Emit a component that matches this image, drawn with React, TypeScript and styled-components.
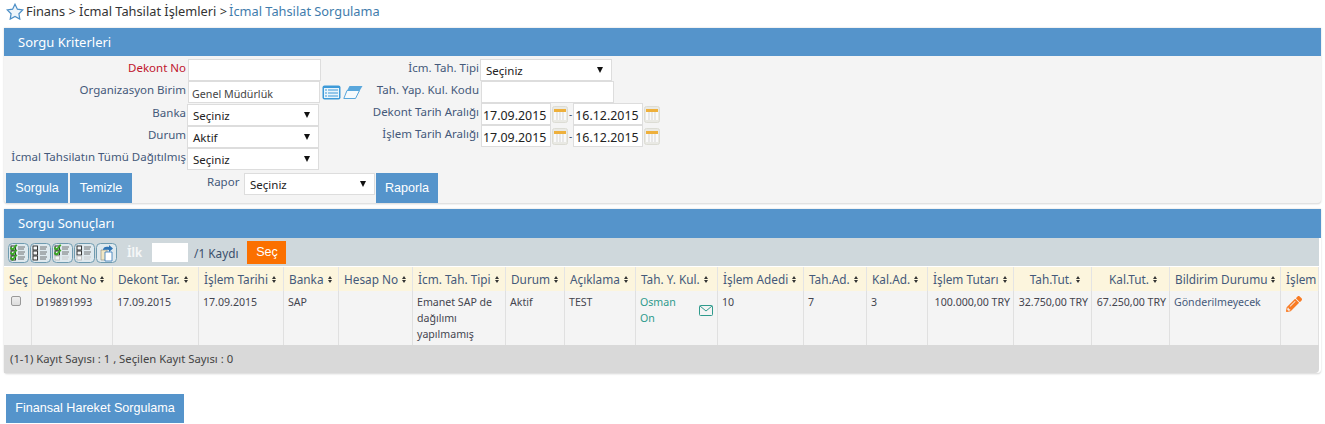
import React from 'react'
import styled, { createGlobalStyle } from 'styled-components'
import { FaPencilAlt } from 'react-icons/fa'

const GlobalStyle = createGlobalStyle`
  html, body {
    margin: 0;
    padding: 0;
    background: #fff;
    font-family: "Noto Sans", "Open Sans", sans-serif;
    font-size: 11px;
    color: #3b4f6b;
  }
`

const Page = styled.div`
  width: 1325px;
  height: 424px;
  overflow: hidden;
  padding: 0 4px;
  box-sizing: border-box;
`

const Breadcrumb = styled.div`
  height: 28px;
  display: flex;
  align-items: center;
  gap: 2px;
  padding: 0 0 6px 2px;
  box-sizing: border-box;
  font-size: 12.8px;
  color: #333;
`

const Crumb = styled.span<{ $active?: boolean }>`
  color: ${({ $active }) => ($active ? '#3f7cac' : '#333')};
`

const Panel = styled.section`
  width: 1317px;
  background: #f4f4f4;
  border-bottom: 1px solid #e2e2e2;
  border-radius: 0 0 4px 4px;
  box-shadow: 0 0 2px #ccc;
`

const PanelTitle = styled.div<{ $height: number }>`
  height: ${({ $height }) => $height}px;
  background: #5594cb;
  color: #fff;
  font-size: 13px;
  line-height: ${({ $height }) => $height}px;
  padding-left: 14px;
`

const FormBody = styled.div`
  padding: 3px 0 0 2px;
  height: 147px;
  box-sizing: border-box;
`

const FormColumns = styled.div`
  display: flex;
  height: 114px;
`

const LeftColumn = styled.div`
  width: 320px;
  flex: none;
`

const RightColumn = styled.div`
  width: 320px;
  margin-left: 21px;
  flex: none;
`

const FormRow = styled.div<{ $labelWidth: number; $tall?: boolean }>`
  display: grid;
  grid-template-columns: ${({ $labelWidth }) => $labelWidth}px auto;
  justify-content: start;
  column-gap: 2px;
  height: ${({ $tall }) => ($tall ? 23 : 22)}px;
  align-items: start;
`

const FieldLabel = styled.label<{ $required?: boolean }>`
  text-align: right;
  white-space: nowrap;
  font-size: 11.5px;
  line-height: 18px;
  color: ${({ $required }) => ($required ? '#c0142c' : '#44597a')};
`

const FieldGroup = styled.div`
  display: flex;
  align-items: center;
  gap: 2px;
`

const DateGroup = styled(FieldGroup)`
  gap: 1px;
  font-size: 10px;
  line-height: 18px;
`

const TextBox = styled.div<{ $width: number }>`
  width: ${({ $width }) => $width}px;
  height: 22px;
  box-sizing: border-box;
  border: 1px solid #ddd;
  background: #fff;
  padding: 1px 0 0 3px;
  font-size: 10.7px;
  line-height: 22px;
  color: #444;
  white-space: nowrap;
`

const DateBox = styled(TextBox)`
  padding: 1px 0 0 1px;
  font-size: 12.4px;
  color: #222;
`

const SelectBox = styled.div<{ $width: number; $shift?: boolean }>`
  width: ${({ $width }) => $width}px;
  height: 22px;
  margin-left: ${({ $shift }) => ($shift ? -1 : 0)}px;
  box-sizing: border-box;
  border: 1px solid #ddd;
  background: #fff;
  padding: 1px 8px 0 5px;
  display: flex;
  align-items: center;
  justify-content: space-between;
  font-size: 11.5px;
  color: #222;
`

const Caret = styled.span`
  width: 0;
  height: 0;
  margin-bottom: 2px;
  border-left: 3.5px solid transparent;
  border-right: 3.5px solid transparent;
  border-top: 6px solid #111;
`

const ActionRow = styled.div`
  display: flex;
  align-items: flex-start;
`

const ButtonPair = styled.div`
  display: flex;
  gap: 2px;
`

const Button = styled.div<{ $width: number }>`
  width: ${({ $width }) => $width}px;
  height: 30px;
  flex: none;
  background: #5594cb;
  color: #fff;
  font-family: "Liberation Sans", Arial, sans-serif;
  font-size: 12.6px;
  line-height: 30px;
  text-align: center;
  white-space: nowrap;
`

const ReportLabel = styled.span`
  width: 33px;
  margin: 0 4px 0 75px;
  font-size: 11.5px;
  line-height: 18px;
  color: #44597a;
`

const ReportSelect = styled(SelectBox)`
  margin-right: 1px;
`

const ResultsPanel = styled(Panel)`
  margin-top: 5px;
  background: #fff;
`

const Toolbar = styled.div`
  width: 1315px;
  height: 29px;
  background: #cfd8dc;
  box-shadow: inset 0 -1px 0 #fff;
  display: flex;
  align-items: center;
  padding-left: 4px;
  box-sizing: border-box;
  font-size: 11.8px;
`

const ToolIcons = styled.div`
  display: flex;
  gap: 1px;
`

const ToolIcon = styled.svg`
  display: block;
`

const FirstLabel = styled.span`
  margin-left: 10px;
  color: #f4f6f7;
  font-weight: 700;
  font-size: 11.5px;
`

const FirstInput = styled.div`
  width: 36px;
  height: 19px;
  background: #fff;
  margin: 0 6px 0 10px;
`

const OrangeButton = styled.div`
  width: 39px;
  height: 23px;
  background: #fb7000;
  color: #fff;
  margin-left: 9px;
  font-family: "Liberation Sans", Arial, sans-serif;
  font-size: 12.6px;
  line-height: 23px;
  text-align: center;
`

const Table = styled.table`
  width: 1315px;
  table-layout: fixed;
  border-collapse: separate;
  border-spacing: 0;
  font-size: 10.6px;
`

const HeadCell = styled.th<{ $center?: boolean }>`
  height: 24px;
  padding: 0 0 0 5px;
  background: #fcf5dd;
  border-right: 1px solid #e4e4e4;
  font-size: 11.8px;
  font-weight: 400;
  color: #44597a;
  text-align: ${({ $center }) => ($center ? 'center' : 'left')};
  white-space: nowrap;
  overflow: hidden;
`

const SortMark = styled.span`
  display: inline-block;
  margin-left: 4px;
  vertical-align: 1px;
  font-size: 0;
  line-height: 0;
  &::before {
    content: '';
    display: block;
    border-left: 2.5px solid transparent;
    border-right: 2.5px solid transparent;
    border-bottom: 3px solid #333;
    margin-bottom: 1px;
  }
  &::after {
    content: '';
    display: block;
    border-left: 2.5px solid transparent;
    border-right: 2.5px solid transparent;
    border-top: 3px solid #333;
  }
`

const Cell = styled.td`
  height: 54px;
  padding: 3px 3px 0 4px;
  box-sizing: border-box;
  vertical-align: top;
  background: #f4f4f4;
  border-right: 1px solid #e0e0e0;
  line-height: 16px;
  color: #44454f;
`

const NumberCell = styled(Cell)`
  white-space: nowrap;
  text-align: right;
  padding: 3px 3px 0 0;
`

const StatusCell = styled(Cell)`
  white-space: nowrap;
  color: #44597a;
`

const ActionCell = styled(Cell)`
  padding: 5px 0 0 5px;
  color: #f97b24;
  font-size: 16px;
`

const CheckBox = styled.span`
  display: block;
  width: 10px;
  height: 10px;
  box-sizing: border-box;
  margin: 2px 0 0 3px;
  border: 1px solid #999;
  border-radius: 2px;
  background: linear-gradient(#eee, #ddd);
`

const UserCell = styled.div`
  display: flex;
  justify-content: space-between;
  color: #2f9a8c;
`

const MailIcon = styled.svg`
  margin: 11px 1px 0 0;
  flex: none;
`

const PanelFooter = styled.div`
  width: 1315px;
  height: 28px;
  background: #d9d9d9;
  border-radius: 0 0 4px 0;
  padding-left: 6px;
  box-sizing: border-box;
  line-height: 27px;
  font-size: 11.3px;
  color: #444;
`

const BottomAction = styled(Button)`
  margin: 20px 0 0 2px;
  height: 29px;
  line-height: 29px;
`

const ListIcon = () => (
  <svg width="19" height="15" viewBox="0 0 19 15">
    <rect x="0.5" y="0.5" width="18" height="14" rx="2" fill="#3d9ad8" />
    <rect x="2" y="3" width="15" height="10" fill="#eaf5fc" />
    <path d="M3 5h2M3 8h2M3 11h2M6 5h10M6 8h10M6 11h10" stroke="#3d9ad8" strokeWidth="1.2" />
  </svg>
)

const EraserIcon = () => (
  <svg width="20" height="15" viewBox="0 0 20 15">
    <path d="M6.5 1H19.5L15 8.5H2.5z" fill="#5aa7dc" />
    <path d="M4 5.5h12.5L12.5 13.5H.8z" fill="#f6fafd" stroke="#5aa7dc" />
  </svg>
)

const CalendarIcon = () => (
  <svg width="16" height="17" viewBox="0 0 16 17">
    <rect x="0.5" y="0.5" width="15" height="16" rx="2" fill="#e9e9e4" stroke="#dcdcd4" />
    <rect x="2" y="3" width="12" height="3" fill="#eeb03c" />
    <rect x="2" y="6" width="12" height="8" fill="#fafafa" />
    <path d="M5 6v8M8 6v8M11 6v8" stroke="#d5d5d5" />
  </svg>
)

const ChecklistIcon = ({ checked, faded }: { checked: boolean; faded?: boolean }) => (
  <ToolIcon width="21" height="20" viewBox="0 0 21 20">
    <rect x="0.5" y="0.5" width="20" height="19" rx="4" fill="#dfe9ee" stroke="#6f9bb0" />
    {[3, 8, 13].map((y, i) => {
      const dim = faded && i === 2
      return (
        <g key={y}>
          <rect x="3" y={y} width="4.5" height="4" fill="#f4f6f7" stroke={dim ? '#bbb' : '#222'} strokeWidth="0.9" />
          {checked && !dim && (
            <path d={`M2.5 ${y + 1.5}l2.2 2.2 4-5`} fill="none" stroke="#35a81f" strokeWidth="1.8" />
          )}
          <path d={`M10 ${y + 1}h7M10 ${y + 3}h6`} stroke={dim ? '#c4c4c4' : '#555'} strokeWidth="0.8" />
        </g>
      )
    })}
  </ToolIcon>
)

const ExportIcon = () => (
  <ToolIcon width="21" height="20" viewBox="0 0 21 20">
    <rect x="0.5" y="0.5" width="20" height="19" rx="4" fill="#dfe9ee" stroke="#6f9bb0" />
    <path d="M5 7h6v10H5z" fill="#f2e7c4" stroke="#9a9a8a" strokeWidth="0.7" />
    <path d="M9 9h7v9H9z" fill="#fff" stroke="#2f74b5" strokeWidth="0.8" />
    <path d="M7 7c0-3 3-4 6-3V2l4 3.5L13 9V7c-2-.5-4 0-6 0z" fill="#2f74b5" />
  </ToolIcon>
)

const columns = [
  { title: 'Seç', width: 28, sort: false },
  { title: 'Dekont No', width: 81, sort: true },
  { title: 'Dekont Tar.', width: 86, sort: true },
  { title: 'İşlem Tarihi', width: 85, sort: true },
  { title: 'Banka', width: 55, sort: true },
  { title: 'Hesap No', width: 74, sort: true },
  { title: 'İcm. Tah. Tipi', width: 93, sort: true },
  { title: 'Durum', width: 59, sort: true },
  { title: 'Açıklama', width: 71, sort: true },
  { title: 'Tah. Y. Kul.', width: 82, sort: true },
  { title: 'İşlem Adedi', width: 86, sort: true },
  { title: 'Tah.Ad.', width: 63, sort: true },
  { title: 'Kal.Ad.', width: 61, sort: true },
  { title: 'İşlem Tutarı', width: 86, sort: true },
  { title: 'Tah.Tut.', width: 78, sort: true, center: true },
  { title: 'Kal.Tut.', width: 78, sort: true, center: true },
  { title: 'Bildirim Durumu', width: 111, sort: true },
  { title: 'İşlem', width: 38, sort: false },
]

export default function App() {
  return (
    <Page>
      <GlobalStyle />
      <Breadcrumb>
        <svg width="18" height="17" viewBox="0 0 18 17">
          <path
            d="M9 1.2l2.4 5 5.4.7-3.9 3.8.9 5.4L9 13.5l-4.8 2.6.9-5.4L1.2 6.9l5.4-.7z"
            fill="#eef5fb"
            stroke="#4b8ec6"
            strokeWidth="1.2"
          />
        </svg>
        <Crumb>Finans &gt; İcmal Tahsilat İşlemleri &gt;</Crumb>
        <Crumb $active>İcmal Tahsilat Sorgulama</Crumb>
      </Breadcrumb>

      <Panel>
        <PanelTitle $height={28}>Sorgu Kriterleri</PanelTitle>
        <FormBody>
          <FormColumns>
            <LeftColumn>
              <FormRow $labelWidth={180}>
                <FieldLabel $required>Dekont No</FieldLabel>
                <TextBox $width={133} />
              </FormRow>
              <FormRow $labelWidth={180} $tall>
                <FieldLabel>Organizasyon Birim</FieldLabel>
                <FieldGroup>
                  <TextBox $width={132}>Genel Müdürlük</TextBox>
                  <ListIcon />
                  <EraserIcon />
                </FieldGroup>
              </FormRow>
              <FormRow $labelWidth={180}>
                <FieldLabel>Banka</FieldLabel>
                <SelectBox $width={132} $shift>Seçiniz<Caret /></SelectBox>
              </FormRow>
              <FormRow $labelWidth={180}>
                <FieldLabel>Durum</FieldLabel>
                <SelectBox $width={132} $shift>Aktif<Caret /></SelectBox>
              </FormRow>
              <FormRow $labelWidth={180}>
                <FieldLabel>İcmal Tahsilatın Tümü Dağıtılmış</FieldLabel>
                <SelectBox $width={132} $shift>Seçiniz<Caret /></SelectBox>
              </FormRow>
            </LeftColumn>
            <RightColumn>
              <FormRow $labelWidth={132}>
                <FieldLabel>İcm. Tah. Tipi</FieldLabel>
                <SelectBox $width={132} $shift>Seçiniz<Caret /></SelectBox>
              </FormRow>
              <FormRow $labelWidth={132}>
                <FieldLabel>Tah. Yap. Kul. Kodu</FieldLabel>
                <TextBox $width={133} />
              </FormRow>
              <FormRow $labelWidth={132}>
                <FieldLabel>Dekont Tarih Aralığı</FieldLabel>
                <DateGroup>
                  <DateBox $width={70}>17.09.2015</DateBox>
                  <CalendarIcon />
                  -
                  <DateBox $width={70}>16.12.2015</DateBox>
                  <CalendarIcon />
                </DateGroup>
              </FormRow>
              <FormRow $labelWidth={132}>
                <FieldLabel>İşlem Tarih Aralığı</FieldLabel>
                <DateGroup>
                  <DateBox $width={70}>17.09.2015</DateBox>
                  <CalendarIcon />
                  -
                  <DateBox $width={70}>16.12.2015</DateBox>
                  <CalendarIcon />
                </DateGroup>
              </FormRow>
            </RightColumn>
          </FormColumns>
          <ActionRow>
            <ButtonPair>
              <Button $width={62}>Sorgula</Button>
              <Button $width={62}>Temizle</Button>
            </ButtonPair>
            <ReportLabel>Rapor</ReportLabel>
            <ReportSelect $width={131}>Seçiniz<Caret /></ReportSelect>
            <Button $width={62}>Raporla</Button>
          </ActionRow>
        </FormBody>
      </Panel>

      <ResultsPanel>
        <PanelTitle $height={29}>Sorgu Sonuçları</PanelTitle>
        <Toolbar>
          <ToolIcons>
            <ChecklistIcon checked />
            <ChecklistIcon checked={false} />
            <ChecklistIcon checked faded />
            <ChecklistIcon checked={false} faded />
            <ExportIcon />
          </ToolIcons>
          <FirstLabel>İlk</FirstLabel>
          <FirstInput />
          /1 Kaydı
          <OrangeButton>Seç</OrangeButton>
        </Toolbar>
        <Table>
          <colgroup>
            {columns.map((c) => (
              <col key={c.title} style={{ width: c.width }} />
            ))}
          </colgroup>
          <thead>
            <tr>
              {columns.map((c) => (
                <HeadCell key={c.title} $center={c.center}>
                  {c.title}
                  {c.sort && <SortMark />}
                </HeadCell>
              ))}
            </tr>
          </thead>
          <tbody>
            <tr>
              <Cell><CheckBox /></Cell>
              <Cell>D19891993</Cell>
              <Cell>17.09.2015</Cell>
              <Cell>17.09.2015</Cell>
              <Cell>SAP</Cell>
              <Cell />
              <Cell>Emanet SAP de dağılımı yapılmamış</Cell>
              <Cell>Aktif</Cell>
              <Cell>TEST</Cell>
              <Cell>
                <UserCell>
                  <span>Osman<br />On</span>
                  <MailIcon width="14" height="12" viewBox="0 0 14 12">
                    <rect x="0.5" y="0.5" width="13" height="10" rx="1" fill="none" stroke="#2f9a8c" />
                    <path d="M1 1l6 5 6-5" fill="none" stroke="#2f9a8c" />
                  </MailIcon>
                </UserCell>
              </Cell>
              <Cell>10</Cell>
              <Cell>7</Cell>
              <Cell>3</Cell>
              <NumberCell>100.000,00 TRY</NumberCell>
              <NumberCell>32.750,00 TRY</NumberCell>
              <NumberCell>67.250,00 TRY</NumberCell>
              <StatusCell>Gönderilmeyecek</StatusCell>
              <ActionCell><FaPencilAlt /></ActionCell>
            </tr>
          </tbody>
        </Table>
        <PanelFooter>(1-1) Kayıt Sayısı : 1 , Seçilen Kayıt Sayısı : 0</PanelFooter>
      </ResultsPanel>

      <BottomAction $width={178}>Finansal Hareket Sorgulama</BottomAction>
    </Page>
  )
}
